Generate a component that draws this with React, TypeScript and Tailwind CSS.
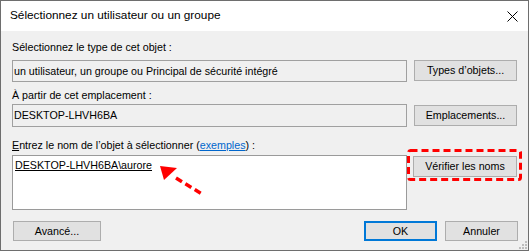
import React from 'react'

const font = { fontFamily: '"Liberation Sans", Arial, sans-serif' }

function WinButton({ label, className = '' }: { label: string; className?: string }) {
  return (
    <div
      className={`flex items-center justify-center bg-[#e1e1e1] border border-[#adadad] text-[10.7px] text-black ${className}`}
    >
      {label}
    </div>
  )
}

function ReadOnlyBox({ text }: { text: string }) {
  return (
    <div className="flex items-center w-[395px] bg-[#f0f0f0] border border-[#a0a0a0] pl-[1px] text-[10.7px] text-black">
      {text}
    </div>
  )
}

// red annotation: dashed arrow pointing at the resolved name
function Annotations() {
  return (
    <svg className="absolute inset-0 pointer-events-none" width="530" height="251">
      <polygon points="160,166 164,180 177,168" fill="#ff0000" />
      <line
        x1="176"
        y1="178"
        x2="202"
        y2="194"
        stroke="#ff0000"
        strokeWidth="3.5"
        strokeDasharray="7 4"
      />
      <rect
        x="408.5"
        y="150.5"
        width="112"
        height="29"
        rx="2"
        fill="none"
        stroke="#ff0000"
        strokeWidth="3"
        strokeDasharray="7 4"
      />
    </svg>
  )
}

export default function App() {
  return (
    <div className="w-[530px] h-[251px] bg-white" style={font}>
      <div className="relative w-[529px] h-[251px] border border-[#6e6e6e] flex flex-col">
        {/* Title bar */}
        <div className="h-[30px] bg-white flex items-center justify-between pl-[9px] pr-[8px]">
          <span className="text-[11.8px] text-black">Sélectionnez un utilisateur ou un groupe</span>
          <svg width="11" height="11" viewBox="0 0 11 11" className="mr-[2px]">
            <path d="M0.5 0.5 L10.5 10.5 M10.5 0.5 L0.5 10.5" stroke="#000" strokeWidth="1" />
          </svg>
        </div>

        {/* Content */}
        <div className="flex-1 bg-[#f0f0f0] pl-[11px] pr-[10px] pt-[9px] flex flex-col">
          <div className="h-[14px] leading-[14px] text-[10.7px] text-black">
            Sélectionnez le type de cet objet :
          </div>
          <div className="mt-[6px] flex gap-[7px] h-[22px]">
            <ReadOnlyBox text="un utilisateur, un groupe ou Principal de sécurité intégré" />
            <WinButton label="Types d’objets..." className="w-[103px] h-[21px]" />
          </div>

          <div className="mt-[6px] h-[14px] leading-[14px] text-[10.7px] text-black">
            À partir de cet emplacement :
          </div>
          <div className="mt-[2px] flex gap-[7px] h-[23px]">
            <ReadOnlyBox text="DESKTOP-LHVH6BA" />
            <WinButton label="Emplacements..." className="w-[103px] h-[21px] mt-[1px]" />
          </div>

          <div className="mt-[11px] h-[14px] leading-[14px] text-[10.7px] text-black">
            <span className="underline">E</span>ntrez le nom de l’objet à sélectionner (
            <span className="text-[#0066cc] underline">exemples</span>) :
          </div>
          <div className="mt-[3px] flex gap-[6px]">
            <div className="w-[395px] h-[55px] bg-white border border-[#9a9a9a] pl-[2px] pt-[2px] text-[10.7px] leading-[14px] text-black">
              <span className="underline">DESKTOP-LHVH6BA\aurore</span>
            </div>
            <WinButton label="Vérifier les noms" className="w-[104px] h-[21px] mt-[1px]" />
          </div>

          <div className="mt-[11px] flex items-center gap-[8px]">
            <WinButton label="Avancé..." className="w-[88px] h-[20px] ml-[1px]" />
            <div className="flex-1" />
            <div className="w-[73px] h-[20px] flex items-center justify-center bg-[#e1e1e1] border-2 border-[#0078d7] text-[10.7px] text-black">
              OK
            </div>
            <WinButton label="Annuler" className="w-[73px] h-[20px]" />
          </div>
        </div>

        {/* resize grip */}
        <svg className="absolute right-[1px] bottom-[1px]" width="8" height="8" viewBox="0 0 8 8">
          <rect x="6" y="0" width="2" height="2" fill="#bdbdbd" />
          <rect x="3" y="3" width="2" height="2" fill="#bdbdbd" />
          <rect x="6" y="3" width="2" height="2" fill="#bdbdbd" />
          <rect x="0" y="6" width="2" height="2" fill="#bdbdbd" />
          <rect x="3" y="6" width="2" height="2" fill="#bdbdbd" />
          <rect x="6" y="6" width="2" height="2" fill="#bdbdbd" />
        </svg>

        <div className="absolute -left-px -top-px">
          <Annotations />
        </div>
      </div>
    </div>
  )
}
